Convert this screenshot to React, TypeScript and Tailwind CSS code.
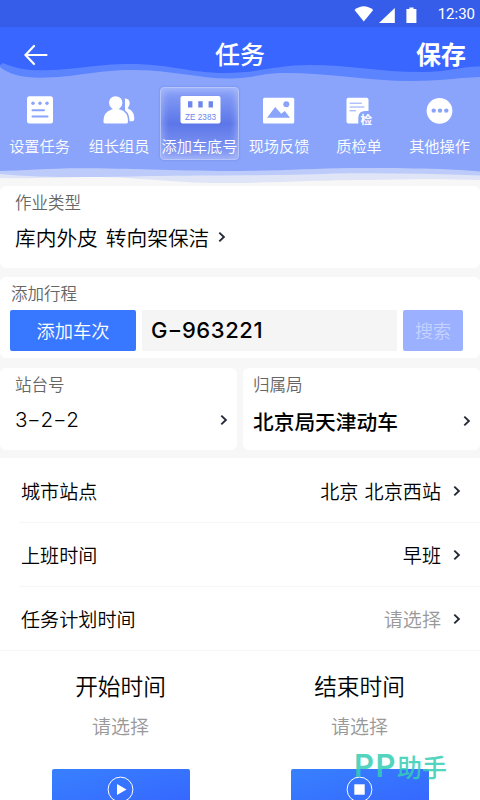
import type { ReactNode } from "react";

function Chevron({ className = "" }: { className?: string }) {
  return (
    <svg className={"w-2 h-3 shrink-0 " + className} viewBox="0 0 8 12" fill="none" stroke="#262a38" strokeWidth="1.9">
      <path d="M1.3 1.6 L5.9 6 L1.3 10.4" />
    </svg>
  );
}

function Dash() {
  return <span className="inline-block w-[0.63em] text-center"><span className="inline-block scale-x-[1.45]">-</span></span>;
}

function StatusBar() {
  return (
    <div className="relative h-[27px] bg-[#365de9] flex items-center justify-end pr-[5px]">
      <svg className="w-[64px] h-[18px] mr-[20px] mt-[6px] mb-[4px]" viewBox="0 0 64 18" fill="#fff">
        <path d="M0.5 4.1 Q9.8 -3.4 19.2 4.1 L9.8 15.6 Z" />
        <path d="M25 17 L40.8 2 V17 Z" />
        <path d="M52.4 3 H55.4 V1.6 H59.6 V3 H62.4 V17 H52.4 Z" />
      </svg>
      <span className="font-[Roboto,sans-serif] text-[15px] leading-[27px] pt-[2px] text-white">12:30</span>
    </div>
  );
}

function Waves() {
  return (
    <svg className="absolute left-0 top-0 w-[480px] h-[186px]" viewBox="0 0 480 186">
      <rect width="480" height="186" fill="#f7f7f7" />
      <path fill="#dfe5f7" d="M0 0 H480 V180 C450 179 410 179 370 180 C310 180 280 183 220 183 C170 183 140 177 95 177 C60 177 30 179 0 178 Z" />
      <path fill="#bdcbfa" d="M0 0 H480 V175.5 C430 173.5 380 173 335 173.5 C270 176 200 175 150 176 C100 177.5 40 178 0 174 Z" />
      <path fill="#8ba4fb" d="M0 0 H480 V171.5 C450 168.5 400 168 350 168 C310 168.5 280 171 230 171 C170 171 130 168.3 80 168.3 C50 168.3 20 171 0 171 Z" />
      <path fill="#5d84ff" d="M0 0 H480 V77 C455 78 440 81 410 81 C370 81 330 73 285 73 C260 73 255 78.5 228 78.5 C200 78.5 170 70 133 70 C95 70 75 77.7 40 77.7 C22 77.7 8 74 0 67 Z" />
      <path fill="#3866ff" d="M0 0 H480 V66.5 C460 66.5 450 72 420 72 C380 72 350 65 310 65 C275 65 260 73 225 73 C190 73 170 64 130 64 C95 64 75 70.3 40 70.3 C24 70.3 12 67 3 63 L0 65 Z" />
    </svg>
  );
}

const tabs: { label: string; icon: ReactNode; active?: boolean }[] = [
  {
    label: "设置任务",
    icon: (
      <>
        <rect x="7" y="1.3" width="26" height="27.2" rx="2.5" fill="#fff" />
        <g fill="#8ba4fb">
          <circle cx="13" cy="8.3" r="1.7" />
          <circle cx="20" cy="8.3" r="1.7" />
          <circle cx="27" cy="8.3" r="1.7" />
        </g>
        <path d="M12.5 15.2 H24 M12.5 21.4 H27.5" stroke="#8ba4fb" strokeWidth="2" strokeLinecap="round" />
      </>
    ),
  },
  {
    label: "组长组员",
    icon: (
      <>
        <path fill="#fff" d="M25 3.6 C29 3 31.5 6 30.5 9.5 C30 11.5 29 12.4 28.8 13.5 C33 15.2 35.3 18 35.3 24 Q35.2 26.2 33.5 26.2 H26 V4 Z" />
        <path fill="#fff" stroke="#8ba4fb" strokeWidth="1.6" d="M16.6 .5 C20.8 .5 24.2 3.5 24.2 7.8 C24.2 10.2 22.9 12.4 21.2 13.8 C26.5 15.4 29.8 19.5 29.8 26 Q29.8 29.3 27.5 29.3 H6.2 Q3.6 29.3 3.6 26.5 C3.6 20 7 15.4 12.3 13.8 C10.6 12.4 9.2 10.2 9.2 7.8 C9.2 3.5 12.4 .5 16.6 .5 Z" />
      </>
    ),
  },
  {
    label: "添加车底号",
    active: true,
    icon: (
      <>
        <rect x="0.5" y="1" width="40" height="27.5" rx="2" fill="#fff" />
        <path fill="#6d87ee" d="M8 6.2 h4.4 v6.4 h-4.4z M18.3 6.2 h4.4 v6.4 h-4.4z M28.6 6.2 h4.4 v6.4 h-4.4z" />
        <text x="20.5" y="24.6" textAnchor="middle" fontFamily="Liberation Sans, sans-serif" fontWeight="400" fontSize="8.2" textLength="31" fill="#6d87ee">ZE 2383</text>
      </>
    ),
  },
  {
    label: "现场反馈",
    icon: (
      <>
        <rect x="4" y="2.7" width="31.2" height="25.8" rx="1.5" fill="#fff" />
        <path fill="#8ba4fb" d="M8 22.7 L16.2 12 L22.2 18.7 L25.8 16 L31 22.7 Z" />
        <circle cx="27.3" cy="9.3" r="3" fill="#8ba4fb" />
      </>
    ),
  },
  {
    label: "质检单",
    icon: (
      <>
        <rect x="7.5" y="2.7" width="22" height="25.8" rx="2" fill="#fff" />
        <path d="M11 8.2 H22.5 M11 12 H25 M11 15.8 H16.5" stroke="#8ba4fb" strokeWidth="1" strokeLinecap="round" />
        <path fill="#8ba4fb" d="M19.3 30 V22 Q19.8 16.2 26 16 H31 V30 Z" />
        <text x="27.4" y="28.7" textAnchor="middle" fontFamily="Noto Sans CJK SC, sans-serif" fontWeight="700" fontSize="11.6" fill="#fff">检</text>
      </>
    ),
  },
  {
    label: "其他操作",
    icon: (
      <>
        <circle cx="19.5" cy="15.8" r="12.9" fill="#fff" />
        <g fill="#8ba4fb">
          <circle cx="13.7" cy="15.6" r="2.2" />
          <circle cx="20" cy="15.6" r="2.2" />
          <circle cx="26.3" cy="15.6" r="2.2" />
        </g>
      </>
    ),
  },
];

function TopTabs() {
  return (
    <div className="relative mt-[5px] grid grid-cols-[79px_80px_80px_80px_80px_81px] h-[73px]">
      {tabs.map((tab) => (
        <div
          key={tab.label}
          className={
            "flex flex-col items-center rounded " +
            (tab.active
              ? "ml-px bg-linear-to-b from-[#8ba2f8] via-[#5c76e8] via-50% to-[#8b9ff4] shadow-[inset_0_0_8px_1px_rgba(200,212,255,0.6),0_0_3px_rgba(80,100,200,0.4)] border border-[#b5c4fb] pt-[7px]"
              : "pt-2")
          }
        >
          <svg className="w-10 h-[30px] overflow-visible" viewBox="0 0 40 30">{tab.icon}</svg>
          <span className="mt-[10px] text-[15.2px] leading-[20px] font-[350] text-white whitespace-nowrap">{tab.label}</span>
        </div>
      ))}
    </div>
  );
}

function Header() {
  return (
    <header className="relative h-[186px]">
      <Waves />
      <StatusBar />
      <div className="relative h-[55px] grid grid-cols-3 items-center text-white text-[25px] leading-[53px] font-medium">
        <svg className="ml-[23px] w-[50px] h-[24px]" viewBox="0 0 50 24" fill="none" stroke="#fff" strokeWidth="2.2" strokeLinecap="round">
          <path d="M11 3 L2.5 12 L11 21 M2.5 12 H23.5" />
        </svg>
        <span className="pb-[2px] text-center">任务</span>
        <span className="pb-[2px] pr-[14px] text-right font-bold">保存</span>
      </div>
      <TopTabs />
    </header>
  );
}

function Row({ label, value, muted }: { label: string; value: string; muted?: boolean }) {
  return (
    <div className="ml-[19px] pl-[2px] pr-[19px] h-16 flex items-center border-b border-[#f6f6f6] text-[19.1px] leading-[64px] font-[350]">
      <span className="flex-1">{label}</span>
      <span className={"[word-spacing:2px] " + (muted ? "text-[#999]" : "")}>{value}</span>
      <Chevron className="ml-[12px]" />
    </div>
  );
}

function TimeColumn({ title, children }: { title: string; children: ReactNode }) {
  return (
    <div className="flex flex-col items-center pt-[19px]">
      <div className="text-[22.7px] leading-[32px] font-[350]">{title}</div>
      <div className="mt-[10px] text-[19px] leading-[28px] font-[350] text-[#999]">请选择</div>
      <div className="mt-[29px] w-[138px] h-[41px] shrink-0 rounded-[2px] bg-linear-to-br from-[#3880ff] to-[#3664ff] flex justify-center pt-[7px]">
        <svg className="w-[27px] h-[27px]" viewBox="0 0 27 27" fill="#fff">
          <circle cx="13.5" cy="13.5" r="12.4" fill="none" stroke="#fff" />
          {children}
        </svg>
      </div>
    </div>
  );
}

export default function App() {
  return (
    <div className="relative w-[480px] h-[800px] overflow-hidden bg-[#f7f7f7] text-black font-['Noto_Sans_CJK_SC',sans-serif]">
      <Header />

      <section className="h-[82px] rounded-md bg-white pl-[15px] pt-[5px]">
        <div className="text-[16.5px] leading-[22px] font-[350] text-[#666]">作业类型</div>
        <div className="mt-[9px] flex items-center text-[20.7px] leading-[30px] font-[350]">
          <span className="[word-spacing:3.5px]">库内外皮 转向架保洁</span>
          <Chevron className="ml-[9px]" />
        </div>
      </section>

      <section className="mt-[9px] h-[81px] rounded-md bg-white pl-[10px] pt-[5px]">
        <div className="pl-px text-[16.5px] leading-[22px] font-[350] text-[#666]">添加行程</div>
        <div className="mt-[6px] flex h-[41px] leading-[41px]">
          <button className="w-[126px] rounded-[2px] bg-[#3877ff] text-white text-[18.3px] font-[350]">添加车次</button>
          <div className="ml-[6px] w-[255px] bg-[#f5f5f5] pl-[9px] font-[Inter,sans-serif] font-medium text-[22px] tracking-[0.6px]">
            G<Dash />963221
          </div>
          <button className="ml-[6px] w-[60px] rounded-[2px] bg-[#9bb1ff] text-[#c6d3ff] text-[18px] font-[350]">搜索</button>
        </div>
      </section>

      <div className="mt-[10px] flex gap-[6px] h-[82px]">
        <section className="w-[237px] rounded-md bg-white pl-[15px] pr-[9px] pt-[5px]">
          <div className="text-[16.5px] leading-[22px] font-[350] text-[#666]">站台号</div>
          <div className="mt-[9px] flex items-center justify-between text-[20.7px] leading-[30px]">
            <span className="pt-px font-[Inter,sans-serif] font-light">
              3<Dash />2<Dash />2
            </span>
            <Chevron />
          </div>
        </section>
        <section className="w-[237px] rounded-md bg-white pl-[10px] pr-[9px] pt-[5px]">
          <div className="text-[16.5px] leading-[22px] font-[350] text-[#666]">归属局</div>
          <div className="mt-[11px] flex items-center justify-between text-[20.7px] leading-[30px] font-medium">
            <span>北京局天津动车</span>
            <Chevron />
          </div>
        </section>
      </div>

      <div className="mt-[8px] pt-px bg-white">
        <Row label="城市站点" value="北京 北京西站" />
        <Row label="上班时间" value="早班" />
        <Row label="任务计划时间" value="请选择" muted />
        <div className="-mt-px flex justify-center gap-[101px] h-[150px] border-t border-[#f6f6f6]">
          <TimeColumn title="开始时间">
            <path d="M10 8 L19.5 13.5 L10 19 Z" />
          </TimeColumn>
          <TimeColumn title="结束时间">
            <path d="M8.3 8.3 H18.7 V18.7 H8.3 Z" />
          </TimeColumn>
        </div>
      </div>

      <div className="absolute left-[354px] top-[748px] flex items-center leading-[36px] text-[#35cdb4] opacity-85 font-medium">
        <span className="font-[Inter,sans-serif] text-[31px] font-semibold tracking-[1.5px]">PP</span>
        <span className="text-[25px]">助手</span>
      </div>
    </div>
  );
}
